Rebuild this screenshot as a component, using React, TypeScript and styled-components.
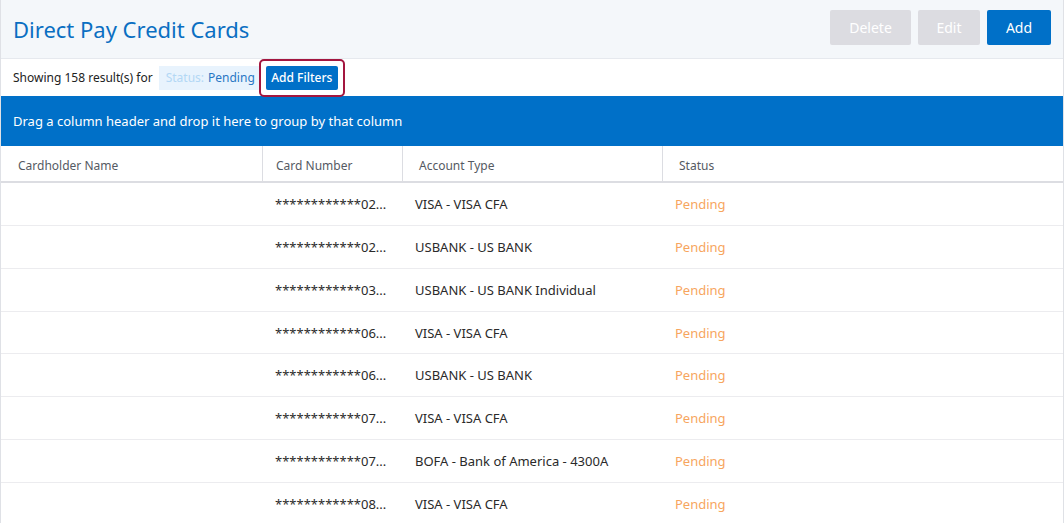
import React, { FC } from "react";
import styled, { createGlobalStyle } from "styled-components";

const GlobalStyle = createGlobalStyle`
  html, body {
    margin: 0;
    padding: 0;
    background: #ffffff;
    font-family: "Noto Sans", "Open Sans", sans-serif;
  }
  * { box-sizing: border-box; }
`;

const Page = styled.div`
  width: 1064px;
  height: 523px;
  overflow: hidden;
  border-left: 1px solid #dfe1e6;
  border-right: 1px solid #dfe1e6;
  background: #fff;
`;

const Header = styled.div`
  height: 59px;
  background: #f4f7fa;
  border-bottom: 1px solid #e6e9ee;
  display: flex;
  align-items: center;
  justify-content: space-between;
  padding: 0 12px 0 12px;
`;

const Title = styled.h1`
  margin: 0;
  font-size: 22px;
  font-weight: 400;
  color: #0a6fc2;
  letter-spacing: 0;
`;

const Actions = styled.div`
  display: flex;
  gap: 7px;
  align-self: flex-start;
  margin-top: 10px;
`;

const ActionButton = styled.button<{ $primary?: boolean; $w: number }>`
  width: ${(p) => p.$w}px;
  height: 35px;
  border: none;
  border-radius: 2px;
  font-family: inherit;
  font-size: 14px;
  color: #fff;
  background: ${(p) => (p.$primary ? "#0070c8" : "#dcdce1")};
`;

const FilterRow = styled.div`
  height: 37px;
  display: flex;
  align-items: center;
  padding-left: 12px;
  font-size: 12px;
  color: #222;
`;

const Chip = styled.span`
  margin-left: 6px;
  height: 24px;
  display: inline-flex;
  align-items: center;
  padding: 0 4px 0 7px;
  background: #e8f3fd;
  color: #2877c4;
  font-size: 12px;
`;

const ChipKey = styled.span`
  color: #b3d8f5;
  margin-right: 4px;
`;

const FocusRing = styled.span`
  border: 2px solid #a3163f;
  border-radius: 5px;
  padding: 5px 5px;
  display: inline-flex;
`;

const FilterButton = styled.button`
  height: 24px;
  width: 72px;
  padding: 0;
  border: none;
  border-radius: 2px;
  background: #0070c8;
  color: #fff;
  font-family: inherit;
  font-size: 12px;
  font-weight: 500;
`;

const GroupBar = styled.div`
  height: 50px;
  background: #0070c8;
  color: #fff;
  display: flex;
  align-items: center;
  padding-left: 12px;
  font-size: 13px;
`;

const Grid = styled.div`
  display: grid;
  grid-template-columns: 262px 140px 260px 1fr;
`;

const HeadCell = styled.div<{ $pad: number; $last?: boolean }>`
  height: 37px;
  display: flex;
  align-items: center;
  padding-left: ${(p) => p.$pad}px;
  padding-top: 3px;
  font-size: 12px;
  color: #555a63;
  border-bottom: 2px solid #dcdde2;
  border-right: ${(p) => (p.$last ? "none" : "1px solid #dcdde2")};
`;

const Cell = styled.div<{ $status?: boolean }>`
  height: 42.86px;
  display: flex;
  align-items: center;
  padding: 0 16px 0 12px;
  font-size: 13px;
  color: ${(p) => (p.$status ? "#f7a55e" : "#2a2a2a")};
  border-bottom: 1px solid #ececef;
  white-space: nowrap;
  overflow: hidden;
`;

interface Card {
  number: string;
  type: string;
}

const cards: Card[] = [
  { number: "************02...", type: "VISA - VISA CFA" },
  { number: "************02...", type: "USBANK - US BANK" },
  { number: "************03...", type: "USBANK - US BANK Individual" },
  { number: "************06...", type: "VISA - VISA CFA" },
  { number: "************06...", type: "USBANK - US BANK" },
  { number: "************07...", type: "VISA - VISA CFA" },
  { number: "************07...", type: "BOFA - Bank of America - 4300A" },
  { number: "************08...", type: "VISA - VISA CFA" },
];

const App: FC = () => {
  return (
    <Page>
      <GlobalStyle />
      <Header>
        <Title>Direct Pay Credit Cards</Title>
        <Actions>
          <ActionButton $w={81}>Delete</ActionButton>
          <ActionButton $w={62}>Edit</ActionButton>
          <ActionButton $w={64} $primary>
            Add
          </ActionButton>
        </Actions>
      </Header>
      <FilterRow>
        Showing 158 result(s) for
        <Chip>
          <ChipKey>Status:</ChipKey>Pending
        </Chip>
        <FocusRing>
          <FilterButton>Add Filters</FilterButton>
        </FocusRing>
      </FilterRow>
      <GroupBar>Drag a column header and drop it here to group by that column</GroupBar>
      <Grid>
        <HeadCell $pad={17}>Cardholder Name</HeadCell>
        <HeadCell $pad={13}>Card Number</HeadCell>
        <HeadCell $pad={16}>Account Type</HeadCell>
        <HeadCell $pad={16} $last>
          Status
        </HeadCell>
        {cards.map((c, i) => (
          <React.Fragment key={i}>
            <Cell />
            <Cell>{c.number}</Cell>
            <Cell>{c.type}</Cell>
            <Cell $status>Pending</Cell>
          </React.Fragment>
        ))}
      </Grid>
    </Page>
  );
};

export default App;
